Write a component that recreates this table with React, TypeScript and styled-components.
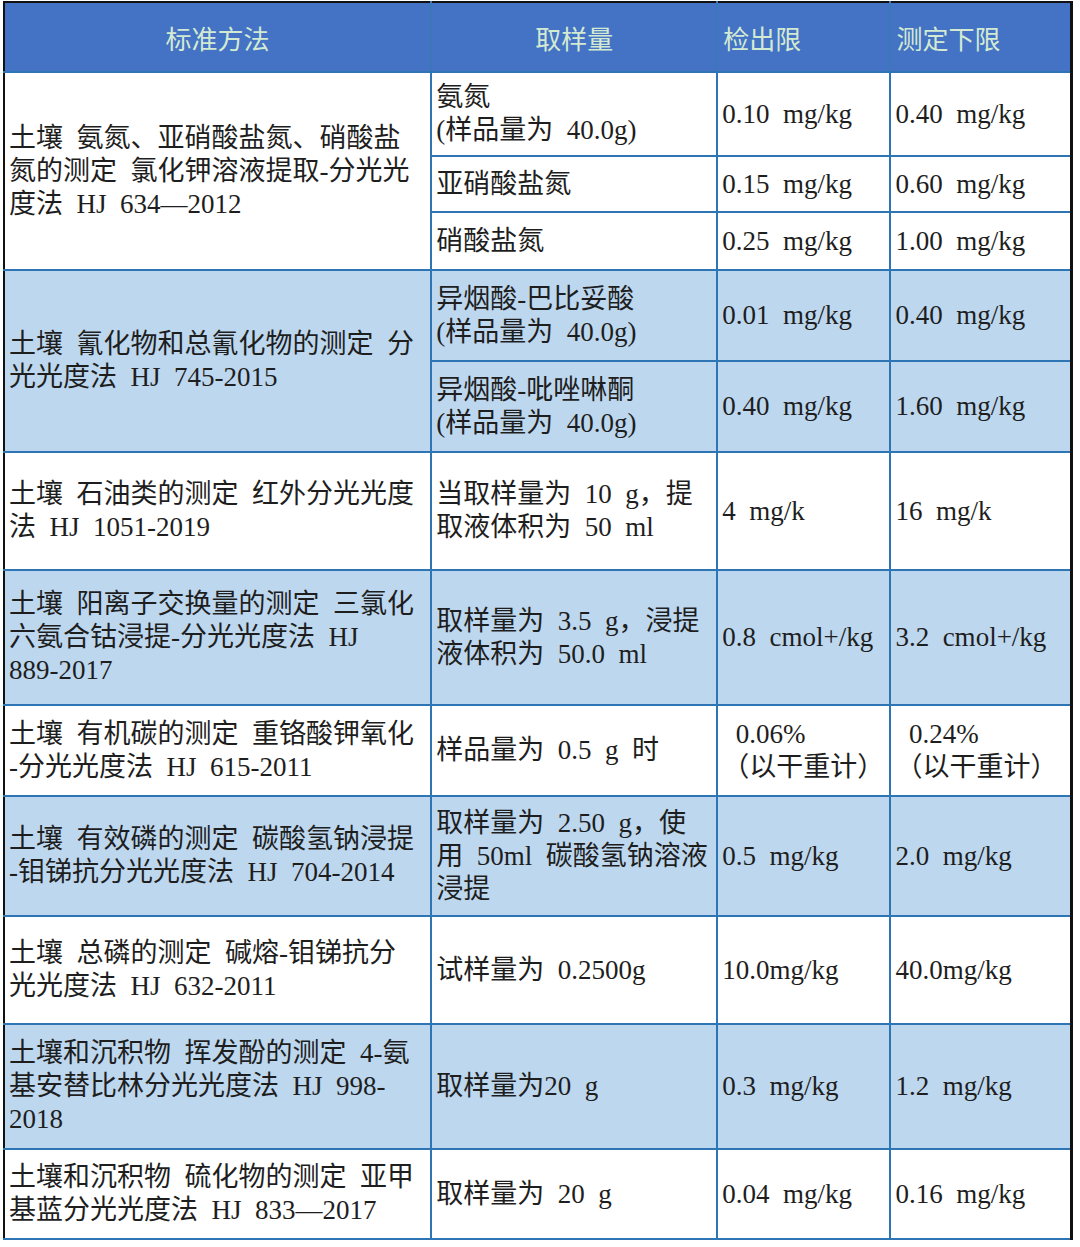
import React from 'react';
import styled, { createGlobalStyle } from 'styled-components';

type Sub = { amount: string[]; detect: string[]; limit: string[]; h: number };
type Group = { method: string[]; blue: boolean; subs: Sub[] };

const groups: Group[] = [
  {
    method: ['土壤 氨氮、亚硝酸盐氮、硝酸盐', '氮的测定 氯化钾溶液提取-分光光', '度法 HJ 634—2012'],
    blue: false,
    subs: [
      { amount: ['氨氮', '(样品量为 40.0g)'], detect: ['0.10 mg/kg'], limit: ['0.40 mg/kg'], h: 84 },
      { amount: ['亚硝酸盐氮'], detect: ['0.15 mg/kg'], limit: ['0.60 mg/kg'], h: 56 },
      { amount: ['硝酸盐氮'], detect: ['0.25 mg/kg'], limit: ['1.00 mg/kg'], h: 58 },
    ],
  },
  {
    method: ['土壤 氰化物和总氰化物的测定 分', '光光度法 HJ 745-2015'],
    blue: true,
    subs: [
      { amount: ['异烟酸-巴比妥酸', '(样品量为 40.0g)'], detect: ['0.01 mg/kg'], limit: ['0.40 mg/kg'], h: 91 },
      { amount: ['异烟酸-吡唑啉酮', '(样品量为 40.0g)'], detect: ['0.40 mg/kg'], limit: ['1.60 mg/kg'], h: 91 },
    ],
  },
  {
    method: ['土壤 石油类的测定 红外分光光度', '法 HJ 1051-2019'],
    blue: false,
    subs: [{ amount: ['当取样量为 10 g，提', '取液体积为 50 ml'], detect: ['4 mg/k'], limit: ['16 mg/k'], h: 118 }],
  },
  {
    method: ['土壤 阳离子交换量的测定 三氯化', '六氨合钴浸提-分光光度法 HJ', '889-2017'],
    blue: true,
    subs: [{ amount: ['取样量为 3.5 g，浸提', '液体积为 50.0 ml'], detect: ['0.8 cmol+/kg'], limit: ['3.2 cmol+/kg'], h: 135 }],
  },
  {
    method: ['土壤 有机碳的测定 重铬酸钾氧化', '-分光光度法 HJ 615-2011'],
    blue: false,
    subs: [{ amount: ['样品量为 0.5 g 时'], detect: ['\u00a00.06%', '（以干重计）'], limit: ['\u00a00.24%', '（以干重计）'], h: 91 }],
  },
  {
    method: ['土壤 有效磷的测定 碳酸氢钠浸提', '-钼锑抗分光光度法 HJ 704-2014'],
    blue: true,
    subs: [{ amount: ['取样量为 2.50 g，使', '用 50ml 碳酸氢钠溶液', '浸提'], detect: ['0.5 mg/kg'], limit: ['2.0 mg/kg'], h: 120 }],
  },
  {
    method: ['土壤 总磷的测定 碱熔-钼锑抗分', '光光度法 HJ 632-2011'],
    blue: false,
    subs: [{ amount: ['试样量为 0.2500g'], detect: ['10.0mg/kg'], limit: ['40.0mg/kg'], h: 108 }],
  },
  {
    method: ['土壤和沉积物 挥发酚的测定 4-氨', '基安替比林分光光度法 HJ 998-', '2018'],
    blue: true,
    subs: [{ amount: ['取样量为20 g'], detect: ['0.3 mg/kg'], limit: ['1.2 mg/kg'], h: 125 }],
  },
  {
    method: ['土壤和沉积物 硫化物的测定 亚甲', '基蓝分光光度法 HJ 833—2017'],
    blue: false,
    subs: [{ amount: ['取样量为 20 g'], detect: ['0.04 mg/kg'], limit: ['0.16 mg/kg'], h: 90 }],
  },
];

const GlobalStyle = createGlobalStyle`
  body {
    margin: 0;
    background: #ffffff;
  }
`;

const Page = styled.div`
  padding: 1px 0 0 3px;
`;

const Table = styled.table`
  width: 1070px;
  table-layout: fixed;
  border-collapse: collapse;
  border-top: 2px solid #111;
  border-left: 2px solid #111;
  border-right: 3px solid #111;
  font-family: 'Liberation Serif', 'Noto Sans CJK SC', serif;
  font-size: 27px;
  line-height: 33px;
  word-spacing: 6.75px;
  color: #1e1e1e;
`;

const HeadRow = styled.tr`
  height: 70px;
  background: #4472c4;
`;

const Th = styled.th<{ $center?: boolean }>`
  padding: 0 5px;
  border-left: 2px solid #3b78b8;
  border-bottom: 2px solid #2e75b6;
  font-family: 'Noto Sans CJK SC', sans-serif;
  font-size: 26px;
  font-weight: 400;
  color: #d3ead2;
  text-align: ${(p) => (p.$center ? 'center' : 'left')};
  vertical-align: middle;
  &:first-child {
    border-left: none;
  }
`;

const Row = styled.tr<{ $blue: boolean; $h: number }>`
  height: ${(p) => p.$h}px;
  background: ${(p) => (p.$blue ? '#bdd7ee' : '#ffffff')};
`;

const Td = styled.td`
  padding: 0 3px 0 4px;
  border: 2px solid #2e75b6;
  vertical-align: middle;
  text-align: left;
  white-space: nowrap;
  &:first-child {
    border-left: none;
  }
  &:last-child {
    border-right: none;
  }
`;

const Lines = ({ lines }: { lines: string[] }) => (
  <>
    {lines.map((l, i) => (
      <React.Fragment key={i}>
        {i > 0 && <br />}
        {l}
      </React.Fragment>
    ))}
  </>
);

export default function App() {
  return (
    <Page>
      <GlobalStyle />
      <Table>
        <colgroup>
          <col style={{ width: 427 }} />
          <col style={{ width: 286 }} />
          <col style={{ width: 173 }} />
          <col style={{ width: 181 }} />
        </colgroup>
        <thead>
          <HeadRow>
            <Th $center>标准方法</Th>
            <Th $center>取样量</Th>
            <Th>检出限</Th>
            <Th>测定下限</Th>
          </HeadRow>
        </thead>
        <tbody>
          {groups.map((g, gi) =>
            g.subs.map((s, si) => (
              <Row key={`${gi}-${si}`} $blue={g.blue} $h={s.h}>
                {si === 0 && (
                  <Td rowSpan={g.subs.length}>
                    <Lines lines={g.method} />
                  </Td>
                )}
                <Td>
                  <Lines lines={s.amount} />
                </Td>
                <Td>
                  <Lines lines={s.detect} />
                </Td>
                <Td>
                  <Lines lines={s.limit} />
                </Td>
              </Row>
            )),
          )}
        </tbody>
      </Table>
    </Page>
  );
}
